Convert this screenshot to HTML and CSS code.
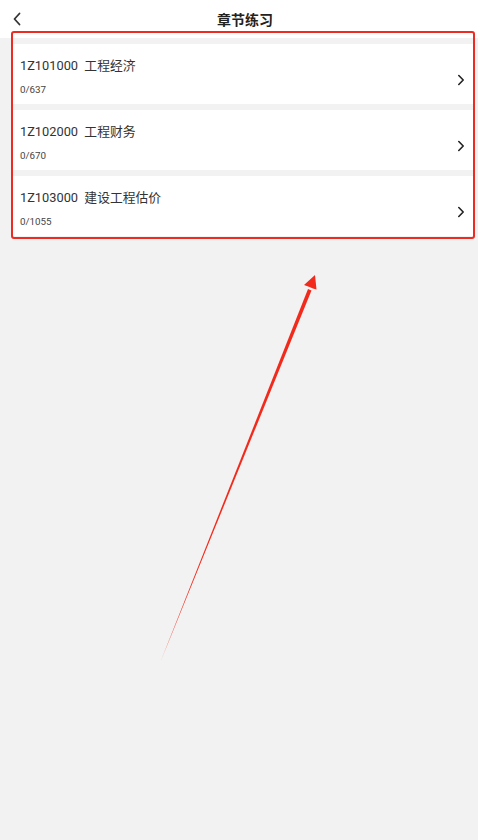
FILE: index.html
```html
<!DOCTYPE html>
<html lang="zh-CN">
<head>
<meta charset="UTF-8">
<meta name="viewport" content="width=device-width, initial-scale=1.0">
<title>章节练习</title>
<link rel="stylesheet" href="styles.css">
</head>
<body>

<div class="topbar">
    <span class="back">
        <svg width="10" height="14" viewBox="0 0 10 14"><path d="M7.5 1.5L2.5 7l5 5.5" fill="none" stroke="#333" stroke-width="1.8" stroke-linecap="round" stroke-linejoin="round"/></svg>
    </span>
    <h1 class="title">章节练习</h1>
</div>

<div class="chapter-list">
    <div class="chapter">
        <div class="chapter-info">
            <p class="chapter-name">1Z101000&nbsp;&nbsp;工程经济</p>
            <p class="chapter-count">0/637</p>
        </div>
        <svg class="arrow" width="8" height="12" viewBox="0 0 8 12"><path d="M1.8 1.5L6.2 6l-4.4 4.5" fill="none" stroke="#222" stroke-width="1.6" stroke-linecap="round" stroke-linejoin="round"/></svg>
    </div>
    <div class="chapter">
        <div class="chapter-info">
            <p class="chapter-name">1Z102000&nbsp;&nbsp;工程财务</p>
            <p class="chapter-count">0/670</p>
        </div>
        <svg class="arrow" width="8" height="12" viewBox="0 0 8 12"><path d="M1.8 1.5L6.2 6l-4.4 4.5" fill="none" stroke="#222" stroke-width="1.6" stroke-linecap="round" stroke-linejoin="round"/></svg>
    </div>
    <div class="chapter">
        <div class="chapter-info">
            <p class="chapter-name">1Z103000&nbsp;&nbsp;建设工程估价</p>
            <p class="chapter-count">0/1055</p>
        </div>
        <svg class="arrow" width="8" height="12" viewBox="0 0 8 12"><path d="M1.8 1.5L6.2 6l-4.4 4.5" fill="none" stroke="#222" stroke-width="1.6" stroke-linecap="round" stroke-linejoin="round"/></svg>
    </div>
</div>

<!-- 标注：红框 + 箭头 -->
<div class="mark-box"></div>
<svg class="mark-arrow" width="478" height="840" viewBox="0 0 478 840">
    <polygon points="160,663 308,289 311.5,290.5" fill="#f22a1c"/>
    <polygon points="315,275 304,285 309.5,287 313,288.5 316.5,289.5" fill="#f22a1c"/>
</svg>

</body>
</html>
```

FILE: styles.css
```css
body {
    margin: 0;
    padding: 0;
    background-color: #f2f2f2;
    font-family: Roboto, "Noto Sans CJK SC", sans-serif;
    color: #333;
    height: 840px;
    position: relative;
    overflow: hidden;
}
.topbar {
    height: 38px;
    background-color: #ffffff;
    display: flex;
    align-items: center;
    justify-content: center;
    padding-left: 12px;
    position: relative;
}
.back {
    position: absolute;
    left: 12px;
    top: 12px;
    display: flex;
}
.title {
    margin: 0;
    font-size: 14px;
    font-weight: bold;
    color: #222;
    font-family: "Noto Sans CJK SC", sans-serif;
}
.chapter-list {
    display: flex;
    flex-direction: column;
    gap: 6px;
    padding: 6px 4px 0 12px;
}
.chapter {
    height: 60px;
    background-color: #ffffff;
    display: flex;
    align-items: flex-start;
    padding: 0 9px 0 8px;
}
.chapter-info {
    flex: 1;
    display: flex;
    flex-direction: column;
    gap: 10px;
    padding-top: 14px;
}
.chapter-name {
    margin: 0;
    font-size: 12.8px;
    color: #333;
    line-height: 16px;
}
.chapter-count {
    margin: 0;
    font-size: 9.8px;
    color: #444;
    line-height: 12px;
}
.arrow {
    margin-top: 30px;
}
.mark-box {
    position: absolute;
    left: 11px;
    top: 31px;
    width: 460px;
    height: 204px;
    border: 2.5px solid #ee2a22;
    border-radius: 3px;
}
.mark-arrow {
    position: absolute;
    left: 0;
    top: 0;
}
```
